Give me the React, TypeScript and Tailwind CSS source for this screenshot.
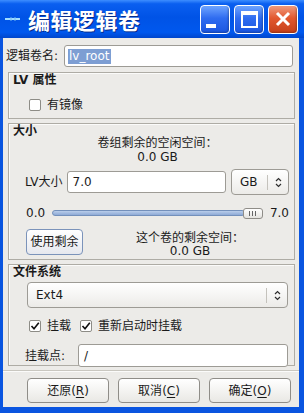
import React from "react";

const font = "font-['DejaVu_Sans','Noto_Sans_CJK_SC',sans-serif]";

function Checkbox({ checked }: { checked?: boolean }) {
  return (
    <span className="flex h-[12px] w-[12px] items-center justify-center rounded-[2px] border border-[#8d8c86] bg-white">
      {checked && (
        <svg width="10" height="10" viewBox="0 0 10 10">
          <path d="M1.5 5 L4 7.8 L8.8 1.8" fill="none" stroke="#111" strokeWidth="1.6" />
        </svg>
      )}
    </span>
  );
}

function UpDown() {
  return (
    <svg width="7" height="11" viewBox="0 0 7 11">
      <path d="M1 4 L3.5 1.5 L6 4" fill="none" stroke="#2e2e2e" strokeWidth="1.2" />
      <path d="M1 7 L3.5 9.5 L6 7" fill="none" stroke="#2e2e2e" strokeWidth="1.2" />
    </svg>
  );
}

function Select({ value, className }: { value: string; className: string }) {
  return (
    <div
      className={`flex items-center rounded-[4px] border border-[#9d9b95] bg-[linear-gradient(to_bottom,#ffffff,#ecebe8)] ${className}`}
    >
      <span className="flex-1 pl-[8px]">{value}</span>
      <span className="h-[15px] w-px bg-[#c4c2bc]" />
      <span className="flex w-[20px] justify-center">
        <UpDown />
      </span>
    </div>
  );
}

function Frame({ title, className, children }: { title: string; className: string; children?: React.ReactNode }) {
  return (
    <div className={`mr-[4px] ml-[5px] flex flex-col border border-[#aeaca5] shadow-[inset_1px_1px_0_#fbfbfa] ${className}`}>
      <div className="h-[11px] pl-[4px] text-[12px] leading-[14px] font-bold">{title}</div>
      {children}
    </div>
  );
}

function WinButton({ children, close }: { children: React.ReactNode; close?: boolean }) {
  return (
    <div
      className={`flex h-[29px] w-[30px] items-center justify-center rounded-[4px] border border-white shadow-[inset_-1px_-1px_2px_rgba(0,0,0,0.25)] ${
        close
          ? "bg-[linear-gradient(to_bottom,#f09a7c,#e2582f_45%,#c6401a)]"
          : "bg-[linear-gradient(to_bottom,#6ea4ff,#2f6cf0_45%,#1a56e0)]"
      }`}
    >
      {children}
    </div>
  );
}

function DlgButton({ label, mnemonic }: { label: string; mnemonic: string }) {
  return (
    <div className="flex h-[25px] w-[82px] items-center justify-center rounded-[4px] border border-[#8f8d88] bg-[linear-gradient(to_bottom,#ffffff,#e9e8e4)] text-[12px]">
      {label}(<span className="underline underline-offset-2">{mnemonic}</span>)
    </div>
  );
}

const FullColon = () => <span className="font-['Noto_Sans_CJK_SC',sans-serif]">：</span>;

export default function App() {
  return (
    <div className={`flex h-[413px] w-[304px] flex-col overflow-hidden bg-[#0a55e0] text-[12px] text-[#1a1a1a] ${font}`}>
      {/* title bar */}
      <div className="flex h-[38px] shrink-0 items-center bg-[linear-gradient(to_bottom,#3d8eff_0%,#0a5ff0_10%,#0053e6_45%,#0058ee_85%,#0046cc_100%)] pr-[6px]">
        <svg width="16" height="6" viewBox="0 0 16 6" className="ml-[5px]">
          <path d="M0 3 H15" stroke="#9fdcff" strokeWidth="2" />
          <path d="M6 1 V5 M10 1 V5" stroke="#6fb8f0" strokeWidth="1" />
        </svg>
        <span className="ml-[7px] flex-1 font-['Noto_Sans_CJK_SC',sans-serif] text-[22px] leading-none font-bold tracking-[0.5px] text-white [text-shadow:1px_1px_0_#0a2c8a]">
          编辑逻辑卷
        </span>
        <div className="flex gap-[4px]">
          <WinButton>
            <span className="mt-[14px] mr-[8px] h-[4px] w-[10px] bg-white" />
          </WinButton>
          <WinButton>
            <span className="h-[17px] w-[17px] border-2 border-t-[4px] border-white" />
          </WinButton>
          <WinButton close>
            <svg width="18" height="18" viewBox="0 0 18 18">
              <path d="M3 3 L15 15 M15 3 L3 15" stroke="#fff" strokeWidth="3" />
            </svg>
          </WinButton>
        </div>
      </div>

      {/* client area */}
      <div className="mr-[5px] mb-[6px] ml-[3px] flex flex-1 flex-col bg-[#ecebe8]">
        <div className="mt-[7px] mr-[6px] flex h-[22px] items-center">
          <span className="w-[61px] pl-[3px]">逻辑卷名:</span>
          <div className="flex h-[22px] flex-1 items-center rounded-[3px] border border-[#9d9b95] bg-white pl-[3px]">
            <span className="bg-[#7d9ed3] px-[1px] leading-[15px] text-white">lv_root</span>
          </div>
        </div>

        <Frame title="LV 属性" className="mt-[5px] h-[47px]">
          <div className="mt-[12px] flex items-center pl-[20px]">
            <Checkbox />
            <span className="ml-[6px]">有镜像</span>
          </div>
        </Frame>

        <Frame title="大小" className="mt-[4px] h-[137px]">
          <div className="flex flex-col items-center pl-[12px] leading-[14px]">
            <span>
              卷组剩余的空闲空间<FullColon />
            </span>
            <span>0.0 GB</span>
          </div>
          <div className="mt-[5px] flex h-[26px] items-center pr-[5px] pl-[16px]">
            <span className="mr-[4px]">LV大小</span>
            <div className="flex h-[22px] flex-1 items-center rounded-[3px] border border-[#9d9b95] bg-white pl-[5px]">
              7.0
            </div>
            <Select value="GB" className="ml-[5px] h-[26px] w-[58px]" />
          </div>
          <div className="mt-[10px] flex h-[16px] items-center pr-[5px] pl-[17px]">
            <span className="w-[26px]">0.0</span>
            <div className="h-[6px] flex-1 rounded-[3px] border border-[#7390bb] bg-[linear-gradient(to_bottom,#b9cdea,#8eaad6)]" />
            <div className="-ml-[2px] flex h-[11px] w-[20px] items-center justify-center gap-[2px] rounded-[3px] border border-[#8f8d88] bg-[linear-gradient(to_bottom,#ffffff,#e4e3df)]">
              <span className="h-[5px] w-px bg-[#666]" />
              <span className="h-[5px] w-px bg-[#666]" />
              <span className="h-[5px] w-px bg-[#666]" />
            </div>
            <span className="ml-[7px]">7.0</span>
          </div>
          <div className="mt-[8px] flex items-start pr-[5px] pl-[17px]">
            <div className="flex h-[26px] w-[57px] items-center justify-center rounded-[4px] border border-[#7b93ba] bg-[linear-gradient(to_bottom,#ffffff,#e6e8ee)]">
              使用剩余
            </div>
            <div className="mt-[1px] flex flex-1 flex-col items-center pl-[8px] leading-[13px]">
              <span>
                这个卷的剩余空间<FullColon />
              </span>
              <span>0.0 GB</span>
            </div>
          </div>
        </Frame>

        <Frame title="文件系统" className="mt-[4px] h-[102px]">
          <div className="mt-[6px] pr-[6px] pl-[18px]">
            <Select value="Ext4" className="h-[26px] w-full" />
          </div>
          <div className="mt-[9px] flex items-center pl-[20px]">
            <Checkbox checked />
            <span className="ml-[6px]">挂载</span>
            <span className="ml-[9px]">
              <Checkbox checked />
            </span>
            <span className="ml-[6px]">重新启动时挂载</span>
          </div>
          <div className="mt-[9px] flex h-[23px] items-center pr-[6px] pl-[16px]">
            <span className="w-[53px]">挂载点:</span>
            <div className="flex h-[23px] flex-1 items-center rounded-[3px] border border-[#9d9b95] bg-white pl-[5px]">
              /
            </div>
          </div>
        </Frame>

        <div className="mt-[4px] h-[2px] border-t border-[#c9c7c0] bg-[#fbfbfa]" />

        <div className="mt-[6px] flex gap-[9px] pl-[24px]">
          <DlgButton label="还原" mnemonic="R" />
          <DlgButton label="取消" mnemonic="C" />
          <DlgButton label="确定" mnemonic="O" />
        </div>
      </div>
    </div>
  );
}
